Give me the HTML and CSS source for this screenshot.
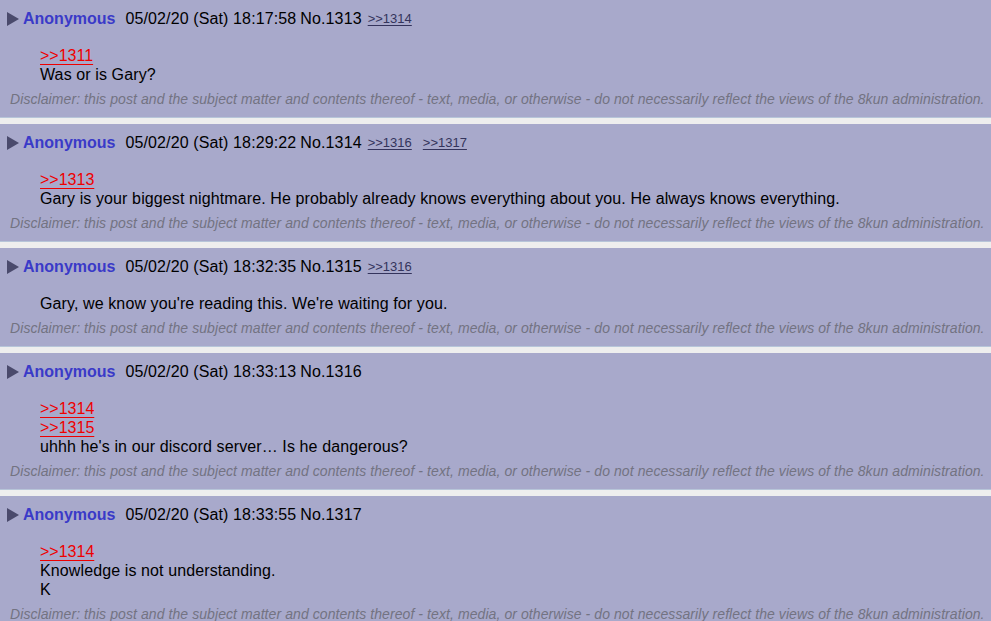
FILE: index.html
```html
<!DOCTYPE html>
<html lang="en">
<head>
<meta charset="utf-8">
<title>Thread</title>
<link rel="stylesheet" href="styles.css">
</head>
<body>
<div class="thread">
  <div class="post">
    <div class="intro">
      <span class="hide-arrow"></span>
      <span class="name">Anonymous</span>
      <span class="time">05/02/20 (Sat) 18:17:58</span>
      <span class="num">No.1313</span>
      <span class="mentions"><a href="#p1314">&gt;&gt;1314</a></span>
    </div>
    <div class="body">
      <a class="quote" href="#p1311">&gt;&gt;1311</a><br>
      Was or is Gary?
    </div>
    <div class="disclaimer">Disclaimer: this post and the subject matter and contents thereof - text, media, or otherwise - do not necessarily reflect the views of the 8kun administration.</div>
  </div>

  <div class="post">
    <div class="intro">
      <span class="hide-arrow"></span>
      <span class="name">Anonymous</span>
      <span class="time">05/02/20 (Sat) 18:29:22</span>
      <span class="num">No.1314</span>
      <span class="mentions"><a href="#p1316">&gt;&gt;1316</a><a href="#p1317">&gt;&gt;1317</a></span>
    </div>
    <div class="body">
      <a class="quote" href="#p1313">&gt;&gt;1313</a><br>
      Gary is your biggest nightmare. He probably already knows everything about you. He always knows everything.
    </div>
    <div class="disclaimer">Disclaimer: this post and the subject matter and contents thereof - text, media, or otherwise - do not necessarily reflect the views of the 8kun administration.</div>
  </div>

  <div class="post">
    <div class="intro">
      <span class="hide-arrow"></span>
      <span class="name">Anonymous</span>
      <span class="time">05/02/20 (Sat) 18:32:35</span>
      <span class="num">No.1315</span>
      <span class="mentions"><a href="#p1316">&gt;&gt;1316</a></span>
    </div>
    <div class="body">
      Gary, we know you're reading this. We're waiting for you.
    </div>
    <div class="disclaimer">Disclaimer: this post and the subject matter and contents thereof - text, media, or otherwise - do not necessarily reflect the views of the 8kun administration.</div>
  </div>

  <div class="post">
    <div class="intro">
      <span class="hide-arrow"></span>
      <span class="name">Anonymous</span>
      <span class="time">05/02/20 (Sat) 18:33:13</span>
      <span class="num">No.1316</span>
    </div>
    <div class="body">
      <a class="quote" href="#p1314">&gt;&gt;1314</a><br>
      <a class="quote" href="#p1315">&gt;&gt;1315</a><br>
      uhhh he's in our discord server… Is he dangerous?
    </div>
    <div class="disclaimer">Disclaimer: this post and the subject matter and contents thereof - text, media, or otherwise - do not necessarily reflect the views of the 8kun administration.</div>
  </div>

  <div class="post">
    <div class="intro">
      <span class="hide-arrow"></span>
      <span class="name">Anonymous</span>
      <span class="time">05/02/20 (Sat) 18:33:55</span>
      <span class="num">No.1317</span>
    </div>
    <div class="body">
      <a class="quote" href="#p1314">&gt;&gt;1314</a><br>
      Knowledge is not understanding.<br>
      K
    </div>
    <div class="disclaimer">Disclaimer: this post and the subject matter and contents thereof - text, media, or otherwise - do not necessarily reflect the views of the 8kun administration.</div>
  </div>
</div>
</body>
</html>
```

FILE: styles.css
```css
html, body {
  margin: 0;
  padding: 0;
  background: #eeeeee;
}

body {
  font-family: "Liberation Sans", Arial, sans-serif;
  color: #000;
  overflow: hidden;
}

.thread {
  display: flex;
  flex-direction: column;
  gap: 6px;
}

.post {
  background: #a8a9cb;
  border-bottom: 1px solid #b7c5d9;
  padding: 9px 4px 9px 7px;
}

.intro {
  display: flex;
  align-items: center;
  height: 20px;
  line-height: 20px;
  font-size: 16px;
  letter-spacing: 0.12px;
  white-space: nowrap;
}

.hide-arrow {
  width: 0;
  height: 0;
  border-top: 7px solid transparent;
  border-bottom: 7px solid transparent;
  border-left: 12px solid #4a4a6c;
  margin-right: 4px;
}

.name {
  font-weight: bold;
  color: #3a3ac8;
  letter-spacing: 0;
  margin-right: 10px;
}

.time {
  margin-right: 4px;
}

.num {
  margin-right: 6px;
}

.mentions {
  display: flex;
  gap: 11px;
  font-size: 13px;
  letter-spacing: 0;
}

.mentions a {
  color: #34345c;
  text-decoration: underline;
  text-underline-offset: 2px;
}

.body {
  margin-top: 17px;
  margin-left: 33px;
  font-size: 16px;
  line-height: 19px;
  letter-spacing: 0.11px;
}

.quote {
  color: #ee0000;
  text-decoration: underline;
  text-underline-offset: 3px;
  letter-spacing: 0;
}

.disclaimer {
  margin-top: 7px;
  margin-left: 3px;
  font-size: 14px;
  line-height: 17px;
  font-style: italic;
  letter-spacing: 0.08px;
  color: #737382;
  white-space: nowrap;
}
```
